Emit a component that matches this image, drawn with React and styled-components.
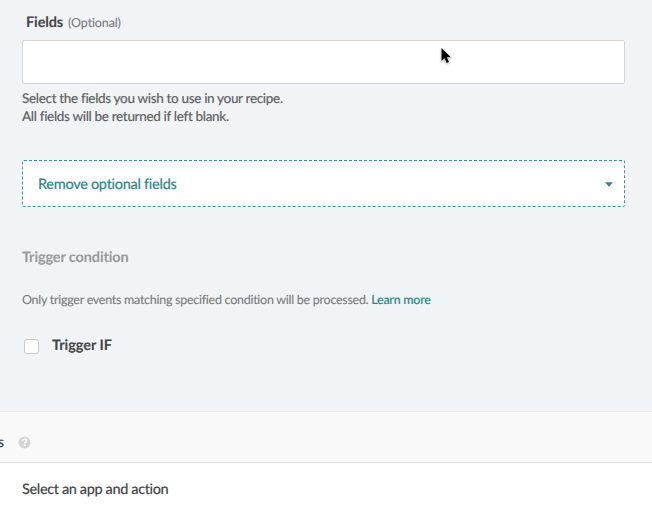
import React from "react";
import styled, { createGlobalStyle } from "styled-components";

const GlobalStyle = createGlobalStyle`
  *, *::before, *::after { box-sizing: border-box; }
  html, body { margin: 0; overflow: hidden; }
  body {
    background: #fff;
    color: #434648;
    font-family: Lato, "Open Sans", sans-serif;
    font-size: 14.5px;
    -webkit-font-smoothing: antialiased;
    -webkit-text-stroke: 0.1px currentColor;
    text-rendering: geometricPrecision;
  }
`;

const Page = styled.main`
  position: relative;
  display: flex;
  flex-direction: column;
  width: 652px;
  height: 508px;
  overflow: hidden;
  white-space: nowrap;
`;

const TriggerPanel = styled.section`
  display: flex;
  flex-direction: column;
  align-items: flex-start;
  height: 411px;
  padding: 13px 27px 0 22px;
  background: #f0f4f7;
`;

const FieldLabel = styled.label`
  display: flex;
  align-items: baseline;
  gap: 5px;
  height: 27px;
  padding-left: 4px;
  line-height: 20px;
  font-weight: 700;
  letter-spacing: -0.12px;
`;

const Optional = styled.span`
  font-size: 12.5px;
  font-weight: 400;
  letter-spacing: -0.12px;
  color: #777a7b;
`;

const FieldInput = styled.div`
  width: 603px;
  height: 44px;
  border: 1px solid #d3d6d8;
  border-radius: 2px;
  background: #fff;
`;

const Hint = styled.p`
  margin: 5px 0 0;
  line-height: 18px;
  font-size: 13.5px;
  font-weight: 500;
  letter-spacing: -0.33px;
  color: #606364;
`;

const OptionalFieldsButton = styled.div`
  display: flex;
  align-items: center;
  justify-content: space-between;
  width: 603px;
  height: 47px;
  margin-top: 35px;
  padding: 2px 11px 0 15px;
  border: 1px dashed #3a9298;
  border-radius: 2px;
  background: #fff;
  color: #2f858a;
  font-weight: 500;
  letter-spacing: -0.3px;
`;

const Caret = styled.svg`
  display: block;
  width: 8px;
  height: 5px;
  fill: #2f858a;
`;

const SectionTitle = styled.h2`
  margin: 41px 0 0;
  line-height: 20px;
  font-size: 14.5px;
  font-weight: 700;
  letter-spacing: -0.13px;
  color: #999b9c;
`;

const Description = styled.p`
  margin: 23px 0 0;
  line-height: 18px;
  font-size: 12.5px;
  letter-spacing: -0.27px;
  color: #777a7b;
`;

const Link = styled.a`
  color: #2f858a;
  font-weight: 500;
`;

const CheckRow = styled.label`
  display: flex;
  align-items: center;
  gap: 13px;
  height: 20px;
  margin: 26px 0 0 2px;
  font-weight: 700;
  letter-spacing: -0.05px;
`;

const Checkbox = styled.span`
  width: 15px;
  height: 15px;
  margin-top: 3px;
  border: 1px solid #c5c8ca;
  border-radius: 3px;
  background: #fff;
`;

const ActionsBar = styled.header`
  display: flex;
  align-items: center;
  height: 52px;
  padding-top: 11px;
  border-top: 1px solid #e6e8e9;
  border-bottom: 1px solid #e3e3e3;
  background: #f9f9f9;
`;

const ActionsTitle = styled.span`
  display: flex;
  justify-content: flex-end;
  width: 4px;
  height: 20px;
  margin-right: 14px;
  line-height: 20px;
  font-weight: 500;
`;

const HelpIcon = styled.svg`
  display: block;
  width: 13px;
  height: 13px;
`;

const ActionStep = styled.section`
  height: 45px;
  padding: 17px 0 0 22px;
  line-height: 20px;
  font-weight: 500;
  letter-spacing: -0.37px;
`;

const Pointer = styled.svg`
  position: absolute;
  left: 438px;
  top: 45px;
  width: 15px;
  height: 22px;
  filter: drop-shadow(0 1px 1px rgba(0, 0, 0, 0.3));
`;

export default function App() {
  return (
    <>
      <GlobalStyle />
      <Page>
        <TriggerPanel>
          <FieldLabel>
            Fields <Optional>(Optional)</Optional>
          </FieldLabel>
          <FieldInput />
          <Hint>
            Select the fields you wish to use in your recipe.
            <br />
            All fields will be returned if left blank.
          </Hint>
          <OptionalFieldsButton>
            Remove optional fields
            <Caret viewBox="0 0 8 5">
              <path d="M0 .3h8L4 4.7z" />
            </Caret>
          </OptionalFieldsButton>
          <SectionTitle>Trigger condition</SectionTitle>
          <Description>
            Only trigger events matching specified condition will be processed.{" "}
            <Link>Learn more</Link>
          </Description>
          <CheckRow>
            <Checkbox />
            Trigger IF
          </CheckRow>
        </TriggerPanel>
        <ActionsBar>
          <ActionsTitle>s</ActionsTitle>
          <HelpIcon viewBox="0 0 13 13">
            <circle cx="6.5" cy="6.5" r="6" fill="#d5d5d5" />
            <path
              d="M4.7 5.1c0-1.1.8-1.8 1.9-1.8s1.9.7 1.9 1.6c0 1.3-1.8 1.3-1.8 2.6"
              fill="none"
              stroke="#fff"
              strokeWidth="1.5"
            />
            <path d="M5.9 8.6h1.6v1.5H5.9z" fill="#fff" />
          </HelpIcon>
        </ActionsBar>
        <ActionStep>Select an app and action</ActionStep>
        <Pointer viewBox="0 0 15 22">
          <path
            d="M3.5 3v13l3-2.8 2.2 4.8 2.3-1-2.1-4.7h4z"
            fill="#000"
            stroke="#fff"
            strokeWidth="1"
            paintOrder="stroke"
          />
        </Pointer>
      </Page>
    </>
  );
}
